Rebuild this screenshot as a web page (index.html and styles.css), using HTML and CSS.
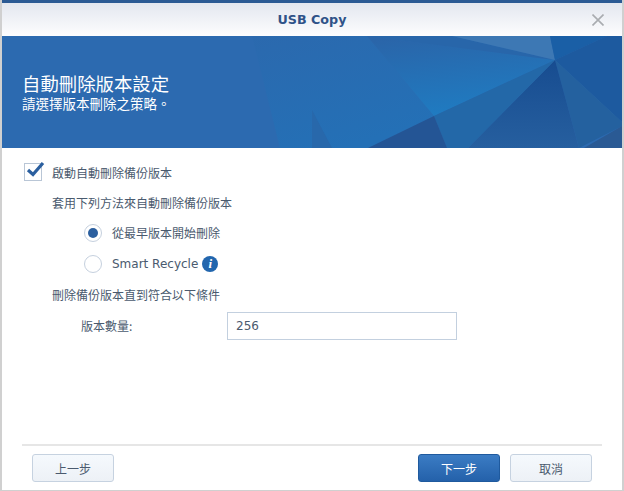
FILE: index.html
```html
<!DOCTYPE html>
<html lang="zh-Hant">
<head>
<meta charset="utf-8">
<title>USB Copy</title>
<link rel="stylesheet" href="styles.css">
</head>
<body>
<div class="window">
	<div class="titlebar">
		<span class="title">USB Copy</span>
		<svg class="close" width="12" height="12" viewBox="0 0 12 12"><path d="M0.5 0.5L11.5 11.5M11.5 0.5L0.5 11.5" stroke="#a9acb0" stroke-width="1.6" fill="none"/></svg>
	</div>
	<div class="banner">
		<svg class="banner_art" width="620" height="112" viewBox="0 0 620 112">
			<defs>
				<linearGradient id="g1" x1="0.2" y1="0" x2="0.5" y2="1"><stop offset="0" stop-color="#2a65a9"/><stop offset="1" stop-color="#1f7cc2"/></linearGradient>
				<linearGradient id="g2" x1="0" y1="0" x2="0" y2="1"><stop offset="0" stop-color="#174c90"/><stop offset="1" stop-color="#265f9f"/></linearGradient>
				<linearGradient id="g3" x1="0" y1="0" x2="0.5" y2="1"><stop offset="0" stop-color="#2b69ae"/><stop offset="1" stop-color="#2470b6"/></linearGradient>
			</defs>
			<rect width="620" height="112" fill="#2c6ab0"/>
			<polygon points="250,0 365,0 432,80 366,112 278,112" fill="url(#g3)"/>
			<polygon points="365,0 553,24 432,80" fill="url(#g1)"/>
			<polygon points="365,0 450,0 553,24" fill="#2866aa"/>
			<polygon points="450,0 548,0 553,24" fill="#3d78b4"/>
			<polygon points="548,0 605,0 553,24" fill="#1a5fa6"/>
			<polygon points="605,0 620,0 620,86 553,24" fill="#1d5a9f"/>
			<polygon points="553,24 620,86 620,90 577,112" fill="#24619f"/>
			<polygon points="553,24 577,112 466,112" fill="url(#g2)"/>
			<polygon points="553,24 466,112 445,112 432,80" fill="#2368a8"/>
			<polygon points="432,80 445,112 366,112" fill="#245595"/>
			<polygon points="620,90 620,112 582,112" fill="#2a5a94"/>
			<polygon points="310,74 330,112 310,112" fill="#2868ab"/>
		</svg>
		<div class="banner_text">
			<h1>自動刪除版本設定</h1>
			<p>請選擇版本刪除之策略。</p>
		</div>
	</div>
	<div class="content">
		<div class="row check_row">
			<span class="checkbox">
				<svg width="22" height="20" viewBox="0 0 22 20"><path d="M4 10L9 14.5L19 3" stroke="#2b5f9f" stroke-width="3.2" fill="none"/></svg>
			</span>
			<span>啟動自動刪除備份版本</span>
		</div>
		<div class="row indent">套用下列方法來自動刪除備份版本</div>
		<div class="row radio_row"><span class="radio on"></span><span>從最早版本開始刪除</span></div>
		<div class="row radio_row"><span class="radio"></span><span class="latin">Smart Recycle</span><span class="info">i</span></div>
		<div class="row indent">刪除備份版本直到符合以下條件</div>
		<div class="row count_row">
			<label class="count_label" for="id_count">版本數量:</label>
			<input class="count_box" id="id_count" type="text" value="256">
		</div>
	</div>
	<div class="footer">
		<button class="btn">上一步</button>
		<div class="spacer"></div>
		<button class="btn primary">下一步</button>
		<button class="btn">取消</button>
	</div>
</div>
</body>
</html>
```
FILE: styles.css
```css
html, body
{
	margin: 0;
	height: 100%;
	background: #d0d0d0;
	overflow: hidden;
}
body
{
	font-family: "Noto Sans CJK TC", "Liberation Sans", sans-serif;
	font-size: 12px;
	color: #4a5a6e;
}
.window
{
	box-sizing: border-box;
	width: 620px;
	height: 490px;
	margin-left: 2px;
	background: #fff;
	border-top: 3px solid #2b5a94;
	display: flex;
	flex-direction: column;
}
.titlebar
{
	height: 33px;
	flex: none;
	display: flex;
	align-items: center;
	justify-content: center;
	position: relative;
	background: linear-gradient(#e3e7ef, #fdfdfe);
}
.title
{
	font-family: "DejaVu Sans", sans-serif;
	font-weight: bold;
	font-size: 12.7px;
	color: #2f5288;
}
.close
{
	position: absolute;
	right: 18px;
	top: 11px;
}
.banner
{
	height: 112px;
	flex: none;
	position: relative;
	background: #2c6ab0;
}
.banner_art
{
	position: absolute;
	left: 0;
	top: 0;
}
.banner_text
{
	position: relative;
	padding: 38px 0 0 20px;
	color: #fff;
	font-family: "Liberation Sans", "Noto Sans CJK TC", sans-serif;
}
.banner_text h1
{
	margin: 0;
	font-size: 18.4px;
	line-height: 22px;
	font-weight: normal;
}
.banner_text p
{
	margin: 0;
	font-size: 13.5px;
	line-height: 18px;
}
.content
{
	flex: 1;
	padding: 13px 22px 0 22px;
}
.row
{
	display: flex;
	align-items: center;
	height: 30px;
}
.check_row { height: 22px; margin-bottom: 4px; }
.indent { padding-left: 28px; }
.radio_row { padding-left: 60px; height: 31px; }
.checkbox
{
	box-sizing: border-box;
	width: 18px;
	height: 18px;
	border: 1px solid #b9c6d6;
	margin-right: 10px;
	position: relative;
}
.checkbox svg
{
	position: absolute;
	left: -1px;
	top: -4px;
}
.radio
{
	box-sizing: border-box;
	width: 18px;
	height: 18px;
	border-radius: 50%;
	border: 1px solid #c5d0de;
	background: #fff;
	margin-right: 10px;
	display: flex;
	align-items: center;
	justify-content: center;
}
.radio.on::before
{
	content: "";
	width: 10px;
	height: 10px;
	border-radius: 50%;
	background: #2b5f9f;
}
.latin
{
	font-family: "DejaVu Sans", sans-serif;
	font-size: 12px;
}
.info
{
	width: 16px;
	height: 16px;
	margin-left: 4px;
	border-radius: 50%;
	background: #2266ae;
	color: #fff;
	font: italic bold 13px/16px "Liberation Serif", serif;
	text-align: center;
}
.count_row { height: 30px; margin-top: 1px; }
.count_label
{
	box-sizing: border-box;
	flex: none;
	width: 203px;
	padding-left: 57px;
}
.count_box
{
	box-sizing: border-box;
	width: 230px;
	height: 28px;
	margin-top: 1px;
	border: 1px solid #c3d0df;
	padding: 0 8px;
	font: 12px "DejaVu Sans", sans-serif;
	color: #4a5a6e;
	outline: none;
}
.footer
{
	box-sizing: border-box;
	flex: none;
	height: 46px;
	margin: 0 20px;
	border-top: 2px solid #e6e6e6;
	display: flex;
	align-items: flex-start;
	padding: 8px 10px 0;
	gap: 10px;
}
.spacer { flex: 1; }
.btn
{
	box-sizing: border-box;
	width: 82px;
	height: 28px;
	border: 1px solid #c6d2e0;
	border-radius: 3px;
	background: linear-gradient(#f5f9fd, #edf1f6);
	font-family: "Noto Sans CJK TC", sans-serif;
	font-size: 12px;
	color: #4a5a6e;
	padding: 0;
}
.primary
{
	border-color: #1f5a9e;
	background: linear-gradient(#3b7cc4, #2461aa);
	color: #fff;
}
```
